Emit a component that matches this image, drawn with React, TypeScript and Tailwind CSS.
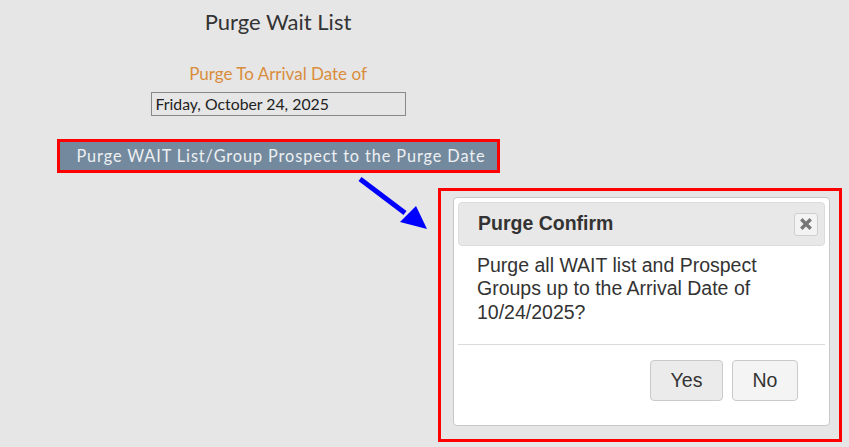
import { useState } from 'react';

function CloseIcon() {
    return (
        <svg width="12" height="12" viewBox="0 0 12 12">
            <path d="M2.5 2.5 L9.5 9.5 M9.5 2.5 L2.5 9.5" stroke="#777" strokeWidth="3.4" strokeLinecap="square" />
        </svg>
    );
}

function Arrow() {
    return (
        <svg className="absolute left-[355px] top-[174px]" width="80" height="60" viewBox="0 0 80 60">
            <line x1="5" y1="5" x2="50" y2="39" stroke="#0000ff" strokeWidth="5" />
            <polygon points="72,55 45,48 61,32" fill="#0000ff" />
        </svg>
    );
}

export default function App() {
    const [date] = useState('Friday, October 24, 2025');

    return (
        <div className="relative w-[849px] h-[447px] overflow-hidden bg-[#e6e6e6]">
            {/* left form */}
            <div className="w-[556px] flex flex-col items-center pt-[8px] font-['Lato',sans-serif]">
                <h1 className="text-[22px] leading-[28px] text-[#333]">Purge Wait List</h1>
                <p className="mt-[26px] text-[17px] leading-[24px] text-[#d98d3c]">Purge To Arrival Date of</p>
                <div className="mt-[6px] w-[255px] h-[24px] border border-[#888] flex items-center pl-[4px] text-[15.8px] text-[#222]">
                    {date}
                </div>
                <div className="mt-[23px] border-[3px] border-[#ff0000]">
                    <button className="h-[28px] w-[437px] pl-[6px] bg-[#738a9e] text-[16.3px] tracking-[0.9px] text-[#eef0f2] leading-none">
                        Purge WAIT List/Group Prospect to the Purge Date
                    </button>
                </div>
            </div>

            <Arrow />

            {/* confirm dialog */}
            <div className="absolute left-[438px] top-[188px] w-[404px] h-[254px] border-[3px] border-[#ff0000] pl-[12px] pr-[9px] pt-[6px] font-['Liberation_Sans',Arial,sans-serif]">
                <div className="w-[377px] h-[229px] bg-white border border-[#c8c8c8] rounded-[4px] p-[4px] flex flex-col">
                    <div className="h-[44px] bg-[#e8e8e8] border border-[#dcdcdc] rounded-[4px] flex items-center justify-between pl-[19px] pr-[6px]">
                        <span className="text-[19.5px] font-bold text-[#333]">Purge Confirm</span>
                        <button className="w-[24px] h-[23px] bg-[#f3f3f3] border border-[#cfcfcf] rounded-[3px] flex items-center justify-center">
                            <CloseIcon />
                        </button>
                    </div>
                    <p className="mt-[8px] pl-[19px] pr-[12px] text-[19.5px] leading-[23.4px] text-[#333]">
                        Purge all WAIT list and Prospect Groups up to the Arrival Date of 10/24/2025?
                    </p>
                    <div className="mt-[20px] border-t border-[#dadada]" />
                    <div className="mt-[15px] flex justify-end gap-[9px] pr-[27px]">
                        <button className="w-[73px] h-[41px] bg-[#ebebeb] border border-[#cacaca] rounded-[4px] text-[19.5px] text-[#333]">Yes</button>
                        <button className="w-[66px] h-[41px] bg-[#f4f4f4] border border-[#cacaca] rounded-[4px] text-[19.5px] text-[#333]">No</button>
                    </div>
                </div>
            </div>
        </div>
    );
}
